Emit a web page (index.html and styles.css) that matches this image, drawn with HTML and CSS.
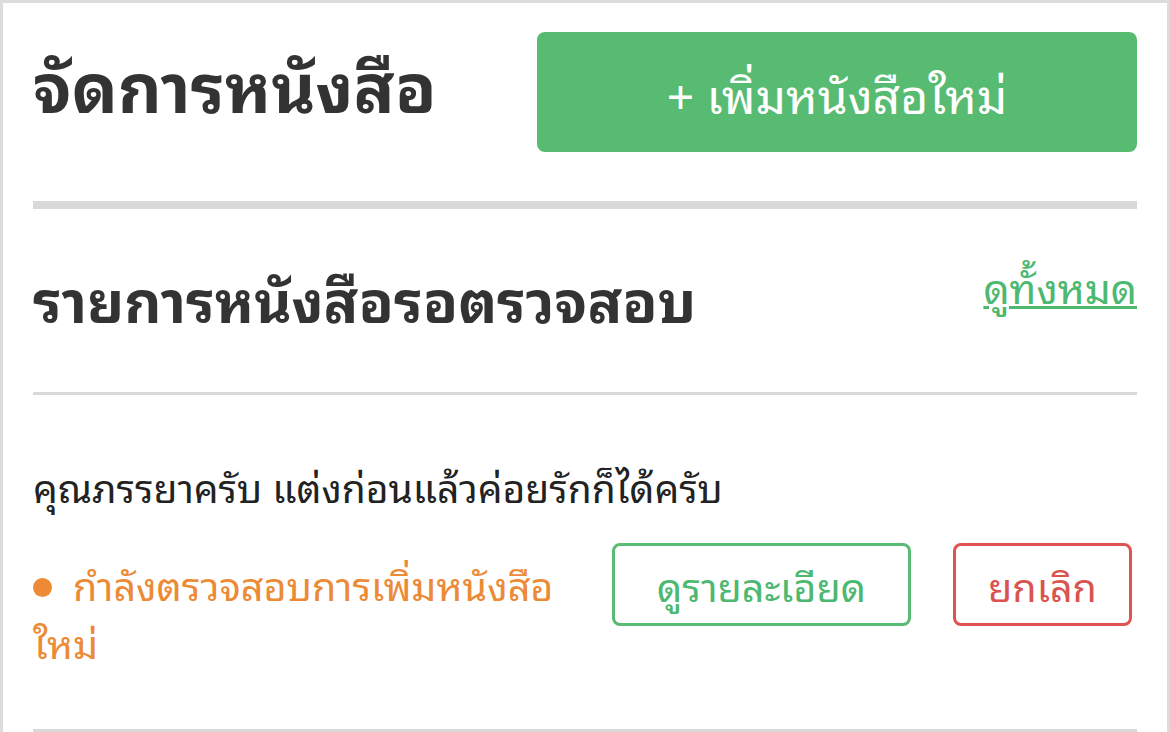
FILE: index.html
```html
<!DOCTYPE html>
<html lang="th">
<head>
  <meta charset="UTF-8">
  <title>จัดการหนังสือ</title>
  <link rel="stylesheet" href="styles.css">
</head>
<body>
  <div class="page">

    <div class="top-bar">
      <h1>จัดการหนังสือ</h1>
      <button class="btn-add">+ เพิ่มหนังสือใหม่</button>
    </div>

    <hr class="divider-thick">

    <div class="section-head">
      <h2>รายการหนังสือรอตรวจสอบ</h2>
      <a href="#" class="see-all">ดูทั้งหมด</a>
    </div>

    <hr class="divider">

    <div class="book-item">
      <p class="book-title">คุณภรรยาครับ แต่งก่อนแล้วค่อยรักก็ได้ครับ</p>
      <div class="book-row">
        <div class="status pending"><span class="dot"></span>กำลังตรวจสอบการเพิ่มหนังสือใหม่</div>
        <div class="actions">
          <button class="btn-line detail">ดูรายละเอียด</button>
          <button class="btn-line cancel">ยกเลิก</button>
        </div>
      </div>
    </div>

    <hr class="divider">

  </div>
</body>
</html>
```

FILE: styles.css
```css
* {
  box-sizing: border-box;
}

body {
  margin: 0;
  font-family: "Noto Sans Thai Looped", "Noto Sans", "Liberation Sans", sans-serif;
  background-color: white;
  color: #222;
}

.page {
  border: 3px solid #dcdcdc;
  border-bottom: none;
  padding: 0 30px;
  min-height: 100vh;
}

.top-bar {
  display: flex;
  justify-content: space-between;
  align-items: center;
  height: 149px;
  padding-top: 29px;
}

h1, h2 {
  margin: 0;
  color: #333;
  font-weight: 700;
}

h1 {
  font-size: 68px;
  line-height: 1.25;
  margin-bottom: 20px;
}

h2 {
  font-size: 57.5px;
}

.btn-add {
  width: 600px;
  height: 120px;
  border: none;
  border-radius: 8px;
  background-color: #57bb72;
  color: white;
  font-family: inherit;
  font-size: 48px;
  cursor: pointer;
}

hr {
  margin: 0;
  border: none;
  background-color: #d9d9d9;
}

.divider-thick {
  height: 8px;
  margin-top: 49px;
}

.divider {
  height: 3px;
}

.section-head {
  display: flex;
  justify-content: space-between;
  align-items: center;
  height: 183px;
  padding-bottom: 8px;
}

.see-all {
  color: #4cb870;
  font-size: 41px;
  text-decoration: underline;
  text-decoration-thickness: 3px;
  align-self: flex-start;
  margin-top: 44px;
}

.book-item {
  padding: 59px 0 0;
  height: 334px;
}

.book-title {
  margin: 0 0 26px;
  font-size: 39px;
}

.book-row {
  display: flex;
  justify-content: space-between;
  align-items: flex-start;
}

.status {
  width: 540px;
  margin-top: 12px;
  font-size: 39.5px;
  line-height: 58px;
}

.status.pending {
  color: #ec8a36;
}

.dot {
  display: inline-block;
  width: 19px;
  height: 19px;
  border-radius: 50%;
  background-color: #ec8a36;
  margin-right: 21px;
  vertical-align: 4px;
}

.actions {
  display: flex;
  gap: 42px;
  margin-right: 5px;
}

.btn-line {
  height: 83px;
  padding: 0;
  background: white;
  border: 3px solid;
  border-radius: 8px;
  font-family: inherit;
  font-size: 39.5px;
  cursor: pointer;
}

.btn-line.detail {
  width: 299px;
  border-color: #5abb74;
  color: #4cb870;
}

.btn-line.cancel {
  width: 179px;
  border-color: #dd5450;
  color: #d9534f;
}
```
